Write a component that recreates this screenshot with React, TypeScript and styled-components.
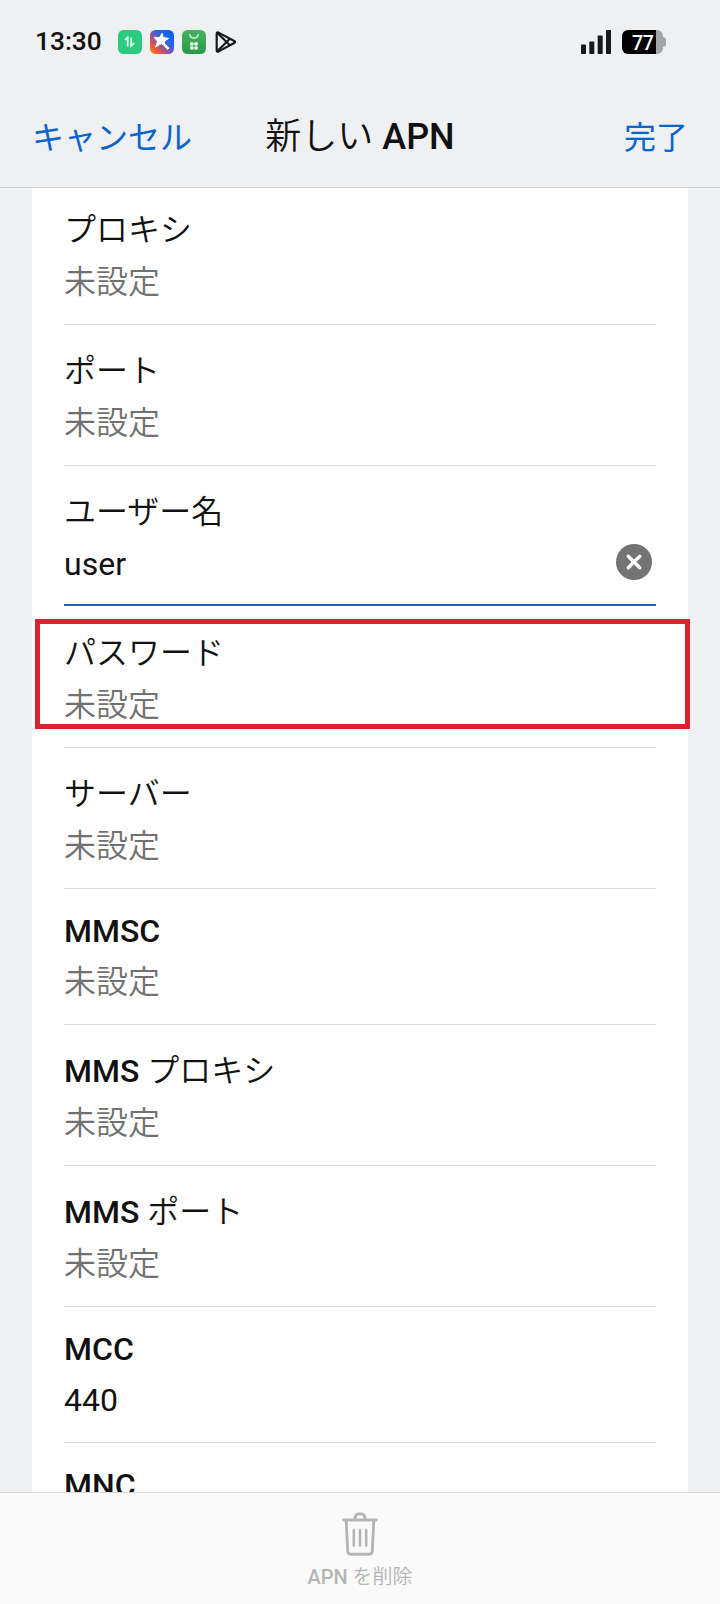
import React from "react";
import styled, { createGlobalStyle } from "styled-components";

const GlobalStyle = createGlobalStyle`
  * { box-sizing: border-box; }
  body {
    margin: 0;
    background: #eef0f2;
    color: #111;
    font-family: Roboto, "Noto Sans CJK JP", sans-serif;
  }
  button { border: 0; padding: 0; background: none; font: inherit; color: inherit; }
`;

const Screen = styled.div`
  display: flex;
  flex-direction: column;
  width: 720px;
  height: 1604px;
  overflow: hidden;
`;

const StatusBar = styled.div`
  display: flex;
  align-items: center;
  height: 84px;
  padding: 0 54px 0 35px;
`;

const Clock = styled.span`
  width: 83px;
  padding-bottom: 2px;
  font-size: 26.3px;
  font-weight: 500;
  line-height: 32px;
`;

const Notifications = styled.div`
  display: flex;
  align-items: center;
  gap: 8px;
  flex: 1;
`;

const Indicators = styled.div`
  display: flex;
  align-items: center;
  gap: 11px;
`;

const Battery = styled.div`
  display: flex;
  align-items: center;
`;

const BatteryBody = styled.div`
  width: 41px;
  height: 24px;
  border-radius: 6px;
  padding-left: 10px;
  background: linear-gradient(to right, #000 34px, #a5a5a5 34px);
  color: #fff;
  font-size: 19.5px;
  font-weight: 500;
  line-height: 27px;
  letter-spacing: -0.4px;
`;

const BatteryNub = styled.div`
  width: 3px;
  height: 10px;
  border-radius: 0 3px 3px 0;
  background: #a5a5a5;
`;

const NavBar = styled.header`
  display: grid;
  grid-template-columns: 1fr auto 1fr;
  height: 104px;
  padding: 0 32px;
  border-bottom: 1px solid #c9cccc;
`;

const NavAction = styled.button<{ $end?: boolean }>`
  justify-self: ${(p) => (p.$end ? "end" : "start")};
  align-self: start;
  margin-top: 35px;
  color: #0b63ce;
  font-size: 32px;
  font-weight: 400;
  line-height: 38px;
`;

const Title = styled.h1`
  margin: 31px 0 0;
  font-size: 36px;
  font-weight: 500;
  line-height: 44px;
`;

const Kana = styled.span`
  font-weight: 350;
`;

const Scroller = styled.main`
  flex: 1;
  min-height: 0;
  overflow: hidden;
  padding: 0 32px;
`;

const Card = styled.div`
  margin-top: -4px;
  padding: 0 32px;
  background: #fff;
`;

const Row = styled.section<{ $latin?: boolean }>`
  position: relative;
  display: flex;
  flex-direction: column;
  gap: ${(p) => (p.$latin ? 13 : 14)}px;
  height: ${(p) => (p.$latin ? 136 : 141)}px;
  padding-top: ${(p) => (p.$latin ? 23 : 27)}px;
  border-bottom: 1px solid #dcdcdc;
`;

const ActiveRow = styled(Row)`
  height: 140px;
  margin-bottom: 1px;
  border-bottom: 2px solid #1f68ad;
`;

const Label = styled.div`
  font-size: 32px;
  font-weight: 500;
  line-height: 38px;
`;

const ValueLine = styled.div`
  display: flex;
  align-items: center;
  justify-content: space-between;
  height: 38px;
  padding-right: 4px;
`;

const Value = styled.span<{ $empty?: boolean }>`
  color: ${(p) => (p.$empty ? "#717171" : "#111")};
  font-size: 32px;
  font-weight: ${(p) => (p.$empty ? 350 : 400)};
  line-height: 38px;
`;

const ClearButton = styled.button`
  display: flex;
  margin-top: -4px;
`;

const Highlight = styled.div`
  position: absolute;
  top: 12px;
  left: -29px;
  right: -34px;
  height: 110px;
  border: 5px solid #d9222d;
`;

const Footer = styled.footer`
  display: flex;
  flex-direction: column;
  align-items: center;
  height: 112px;
  padding-top: 19px;
  border-top: 1px solid #dadada;
  background: #fafafa;
  color: #b5b5b5;
`;

const FooterLabel = styled.span`
  margin-top: 9px;
  font-size: 20px;
  font-weight: 500;
  line-height: 24px;
`;

const DataIcon = () => (
  <svg width="24" height="24" viewBox="0 0 24 24">
    <rect width="24" height="24" rx="5.5" fill="#2dcb7f" />
    <path d="M7 9.8 9.7 7.4V16.5M13.2 7.4V16L16.2 13" fill="none" stroke="#e6fff2" strokeWidth="1.7" />
  </svg>
);

const StarIcon = () => (
  <svg width="24" height="24" viewBox="0 0 24 24">
    <defs>
      <linearGradient id="starBg" x1="0" y1="1" x2="1" y2="0">
        <stop offset="0" stopColor="#ff9a1f" />
        <stop offset="0.22" stopColor="#f0523c" />
        <stop offset="0.5" stopColor="#6957c4" />
        <stop offset="0.68" stopColor="#1769ef" />
        <stop offset="1" stopColor="#1257e6" />
      </linearGradient>
    </defs>
    <rect width="24" height="24" rx="5.5" fill="url(#starBg)" />
    <path
      d="M12.2 3.2 13.1 7.6 18.6 8.4 14.3 11.2 14.8 15.6 11.2 13.6 5.4 17.2 7.7 11.6 4 7.3 9.4 7.6Z"
      fill="#fff"
      stroke="#fff"
      strokeWidth="1"
      strokeLinejoin="round"
    />
    <path d="m14.6 14.8 4 4.4" stroke="#fff" strokeWidth="2.6" />
  </svg>
);

const BagIcon = () => (
  <svg width="24" height="24" viewBox="0 0 24 24">
    <defs>
      <linearGradient id="bagBg" x1="0" y1="0" x2="0" y2="1">
        <stop offset="0" stopColor="#48b263" />
        <stop offset="1" stopColor="#2b9a48" />
      </linearGradient>
    </defs>
    <rect width="24" height="24" rx="5.5" fill="url(#bagBg)" />
    <path d="M7.8 4.6C8.6 9.2 15.4 9.2 16.2 4.6" fill="none" stroke="#e3f8e6" strokeWidth="1.3" strokeLinecap="round" />
    <g fill="#e3f8e6">
      <rect x="8" y="12.2" width="3.7" height="3.5" rx="1.4" />
      <rect x="12.2" y="12.2" width="3.7" height="3.5" rx="1.4" />
      <rect x="8" y="16.2" width="3.7" height="3.5" rx="1.4" />
      <rect x="12.2" y="16.2" width="3.7" height="3.5" rx="1.4" />
    </g>
  </svg>
);

const PlayIcon = () => (
  <svg width="24" height="24" viewBox="0 0 24 24" fill="none" stroke="#17191b" strokeWidth="2.2" strokeLinejoin="round">
    <path d="M2.7 3.5Q2.7 1.7 4.5 2.6L20.3 11Q22 12 20.3 13L4.5 21.4Q2.7 22.3 2.7 20.5Z" />
    <path d="M3.2 2.8 15.9 15.2M3.2 21.2 15.9 8.8" />
  </svg>
);

const SignalIcon = () => (
  <svg width="30" height="24" viewBox="0 0 30 24" fill="#17191b">
    <rect x="0" y="14.5" width="5" height="9.5" rx="0.8" />
    <rect x="8.3" y="11.5" width="5" height="12.5" rx="0.8" />
    <rect x="16.7" y="5.5" width="5" height="18.5" rx="0.8" />
    <rect x="25" y="0" width="5" height="24" rx="0.8" />
  </svg>
);

const ClearIcon = () => (
  <svg width="36" height="36" viewBox="0 0 36 36">
    <circle cx="18" cy="18" r="18" fill="#737373" />
    <path d="m12.2 12.2 11.6 11.6M23.8 12.2 12.2 23.8" stroke="#fff" strokeWidth="3.4" strokeLinecap="round" />
  </svg>
);

const TrashIcon = () => (
  <svg width="36" height="44" viewBox="0 0 36 44" fill="none" stroke="currentColor" strokeWidth="2.9" strokeLinecap="round">
    <path d="M1.8 8H34.2" />
    <path d="M12.9 7.5C12.9 3.6 14.2 2 16.6 2H19.4C21.8 2 23.1 3.6 23.1 7.5" />
    <path d="M4.2 8.3 5.7 39.2Q5.9 42.2 8.7 42.2H27.3Q30.1 42.2 30.3 39.2L31.8 8.3" />
    <path d="M11.8 18V33.6M18 18V33.6M24.2 18V33.6" strokeWidth="2.6" />
  </svg>
);

type Field = {
  latin?: string;
  kana?: string;
  value?: string;
  active?: boolean;
  highlighted?: boolean;
};

const fields: Field[] = [
  { kana: "プロキシ" },
  { kana: "ポート" },
  { kana: "ユーザー名", value: "user", active: true },
  { kana: "パスワード", highlighted: true },
  { kana: "サーバー" },
  { latin: "MMSC" },
  { latin: "MMS ", kana: "プロキシ" },
  { latin: "MMS ", kana: "ポート" },
  { latin: "MCC", value: "440" },
  { latin: "MNC", value: "" },
];

const FieldRow = ({ latin, kana, value, active, highlighted }: Field) => {
  const Container = active ? ActiveRow : Row;
  return (
    <Container $latin={!kana}>
      <Label>
        {latin}
        {kana && <Kana>{kana}</Kana>}
      </Label>
      <ValueLine>
        <Value $empty={!value}>{value ?? "未設定"}</Value>
        {active && (
          <ClearButton aria-label="クリア">
            <ClearIcon />
          </ClearButton>
        )}
      </ValueLine>
      {highlighted && <Highlight />}
    </Container>
  );
};

export default function App() {
  return (
    <Screen>
      <GlobalStyle />
      <StatusBar>
        <Clock>13:30</Clock>
        <Notifications>
          <DataIcon />
          <StarIcon />
          <BagIcon />
          <PlayIcon />
        </Notifications>
        <Indicators>
          <SignalIcon />
          <Battery>
            <BatteryBody>77</BatteryBody>
            <BatteryNub />
          </Battery>
        </Indicators>
      </StatusBar>
      <NavBar>
        <NavAction>キャンセル</NavAction>
        <Title>
          <Kana>新しい</Kana> APN
        </Title>
        <NavAction $end>完了</NavAction>
      </NavBar>
      <Scroller>
        <Card>
          {fields.map((field, i) => (
            <FieldRow key={i} {...field} />
          ))}
        </Card>
      </Scroller>
      <Footer>
        <TrashIcon />
        <FooterLabel>
          APN <Kana>を削除</Kana>
        </FooterLabel>
      </Footer>
    </Screen>
  );
}
